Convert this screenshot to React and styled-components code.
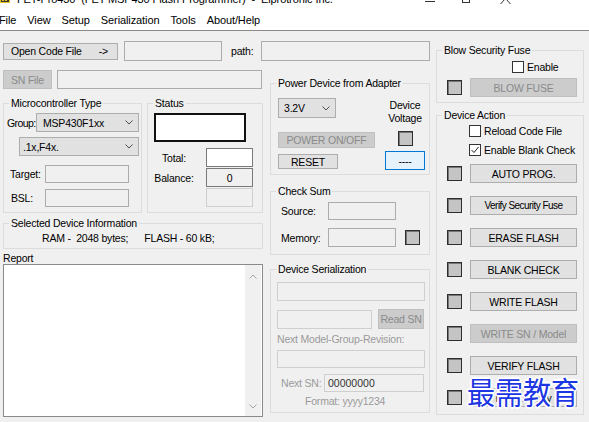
import React from "react";
import styled, { createGlobalStyle } from "styled-components";

const GlobalStyle = createGlobalStyle`
  *, *::before, *::after { box-sizing: border-box; }
  html, body { margin: 0; padding: 0; background: #f0f0f0; }
  body {
    font-family: "Liberation Sans", Arial, sans-serif;
    font-size: 10.5px;
    letter-spacing: -0.2px;
    color: #000;
  }
`;

const Window = styled.div`
  position: relative;
  width: 589px;
  height: 422px;
  overflow: hidden;
  background: #f0f0f0;
`;

const TitleBar = styled.div`
  height: 10px;
  background: #fff;
  overflow: hidden;
`;

const TitleRow = styled.div`
  display: flex;
  align-items: flex-start;
  margin-top: -7px;
  height: 17px;
  font-size: 11px;
  line-height: 12px;
  letter-spacing: -0.1px;
  white-space: pre;
`;

const TitleText = styled.span`
  margin-left: 7px;
`;

const WinControls = styled.div`
  margin-left: auto;
  margin-right: 78px;
  display: flex;
  align-items: flex-start;
`;

const CtlGlyph = styled.svg`
  flex: none;
  margin-left: ${(p) => p.$ml || 0}px;
  margin-top: ${(p) => p.$mt || 0}px;
`;

const MenuBar = styled.div`
  display: flex;
  align-items: center;
  gap: 11px;
  height: 21px;
  background: #fff;
  border-bottom: 1px solid #8a8a8a;
  font-size: 11px;
  letter-spacing: -0.1px;
`;

const MenuItem = styled.span`
  line-height: 14px;
  &:first-child { margin-left: -1px; }
`;

const Body = styled.div`
  display: flex;
  gap: 5px;
  padding: 10px 0 0 3px;
`;

const LeftArea = styled.div`
  width: 428px;
  display: flex;
  flex-direction: column;
`;

const Row = styled.div`
  display: flex;
  align-items: ${(p) => p.$align || "center"};
  gap: ${(p) => p.$gap || 0}px;
  height: ${(p) => (p.$h ? `${p.$h}px` : "auto")};
  margin-top: ${(p) => p.$mt || 0}px;
  margin-left: ${(p) => p.$ml || 0}px;
`;

const LowerRow = styled.div`
  display: flex;
  gap: 7px;
  align-items: flex-start;
`;

const Column = styled.div`
  width: ${(p) => p.$w}px;
  margin-top: ${(p) => p.$mt || 0}px;
  display: flex;
  flex-direction: column;
`;

const Btn = styled.button`
  font: inherit;
  font-size: ${(p) => p.$fs || 10.5}px;
  letter-spacing: ${(p) => (p.$ls != null ? p.$ls : -0.2)}px;
  padding: 0;
  margin: 0 0 0 ${(p) => p.$ml || 0}px;
  width: ${(p) => p.$w}px;
  height: ${(p) => p.$h || 19}px;
  flex: none;
  display: flex;
  align-items: center;
  justify-content: center;
  white-space: nowrap;
  background: ${(p) => (p.$focus ? "#e5f1fb" : p.disabled ? "#cccccc" : "#e1e1e1")};
  border: 1px solid ${(p) => (p.$focus ? "#0078d7" : p.disabled ? "#bfbfbf" : "#adadad")};
  color: ${(p) => (p.disabled ? "#8a8a8a" : "#000")};
  border-radius: 0;
`;

const OpenBtn = styled(Btn)`
  justify-content: space-between;
  padding: 0 9px 0 7px;
`;

const Field = styled.div`
  width: ${(p) => p.$w}px;
  height: ${(p) => p.$h || 19}px;
  flex: none;
  margin-left: ${(p) => p.$ml || 0}px;
  background: ${(p) => (p.$variant === "white" ? "#fff" : "#f0f0f0")};
  border: 1px solid
    ${(p) =>
      ({ white: "#7a7a7a", ro: "#acacac", dark: "#7a7a7a", dis: "#cfcfcf" }[p.$variant || "ro"])};
  display: flex;
  align-items: center;
  justify-content: ${(p) => (p.$center ? "center" : "flex-start")};
  padding: 0 3px;
  color: #000;
`;

const SNValue = styled.span`
  color: #333;
  letter-spacing: 0;
`;

const Label = styled.span`
  flex: none;
  width: ${(p) => (p.$w ? `${p.$w}px` : "auto")};
  margin-left: ${(p) => p.$ml || 0}px;
  text-align: ${(p) => p.$align || "left"};
  letter-spacing: ${(p) => (p.$ls != null ? p.$ls : -0.2)}px;
  white-space: nowrap;
  line-height: 12px;
  color: ${(p) => (p.$muted ? "#9a9a9a" : "#000")};
`;

const Group = styled.fieldset`
  margin: ${(p) => p.$mt || 0}px 0 0 0;
  padding: 0;
  min-width: 0;
  border: 1px solid #dcdcdc;
  width: ${(p) => p.$w}px;
  height: ${(p) => p.$h}px;
  flex: none;
`;

const Legend = styled.legend`
  margin-left: 5px;
  padding: 0 2px;
  height: 12px;
  line-height: 12px;
  font-size: 10.5px;
`;

const Inner = styled.div`
  display: flex;
  flex-direction: column;
  padding: ${(p) => p.$pad || "0"};
`;

const Combo = styled.div`
  width: ${(p) => p.$w}px;
  height: ${(p) => p.$h || 19}px;
  flex: none;
  margin-left: ${(p) => p.$ml || 0}px;
  display: flex;
  align-items: center;
  justify-content: space-between;
  background: #e1e1e1;
  border: 1px solid #adadad;
  padding: 0 5px 0 ${(p) => p.$pl || 4}px;
`;

const StatusBox = styled.div`
  width: 92px;
  height: 29px;
  margin: 4px 0 0 6px;
  background: #fff;
  border: 2px solid #111;
`;

const StatusRows = styled.div`
  display: flex;
  flex-direction: column;
  gap: 1px;
  margin-top: 6px;
`;

const InfoText = styled.div`
  padding: 3px 0 0 38px;
  line-height: 12px;
  white-space: pre;
`;

const FlashSpan = styled.span`
  margin-left: 16px;
`;

const ReportLabel = styled.div`
  margin-top: 3px;
  line-height: 12px;
`;

const ReportBox = styled.div`
  height: 153px;
  background: #fff;
  border: 1px solid #8a8a8a;
  display: flex;
  justify-content: flex-end;
`;

const ScrollBar = styled.div`
  width: 16px;
  margin: 0 1px 0 0;
  background: #f0f0f0;
  display: flex;
  flex-direction: column;
  justify-content: space-between;
  align-items: center;
  padding: 9px 0 7px;
`;

const PowerBody = styled.div`
  display: flex;
`;

const PowerLeft = styled.div`
  display: flex;
  flex-direction: column;
  margin-left: 7px;
`;

const PowerRight = styled.div`
  width: 42px;
  margin-left: auto;
  margin-right: 3px;
  display: flex;
  flex-direction: column;
  align-items: center;
`;

const VoltText = styled.div`
  margin-top: 10px;
  line-height: 13px;
  text-align: center;
`;

const Lamp = styled.span`
  width: 15px;
  height: 15px;
  flex: none;
  margin-left: ${(p) => p.$ml || 0}px;
  margin-top: ${(p) => p.$mt || 0}px;
  background: #c4c4c4;
  border: 1px solid #2e2e2e;
  box-shadow: inset 1px 1px 0 #777;
`;

const Stack = styled.div`
  margin-top: ${(p) => p.$mt || 0}px;
`;

const CheckRow = styled.div`
  display: flex;
  align-items: center;
  gap: 3px;
  height: 12px;
  margin-top: ${(p) => p.$mt || 0}px;
  margin-left: ${(p) => p.$ml || 0}px;
`;

const CheckBox = styled.span`
  width: 12px;
  height: 12px;
  flex: none;
  border: 1px solid #333;
  background: #fff;
  display: flex;
  align-items: center;
  justify-content: center;
`;

const ActionList = styled.div`
  display: flex;
  flex-direction: column;
  gap: 13px;
  margin-top: 8px;
`;

const ActionRow = styled.div`
  display: flex;
  align-items: center;
  height: 19px;
`;

const FormatText = styled.div`
  margin: 3px 0 0 28px;
  line-height: 12px;
  color: #9a9a9a;
`;

const Watermark = styled.div`
  position: absolute;
  left: 467px;
  top: 373px;
  font-family: "Noto Sans CJK SC", "Noto Sans CJK JP", sans-serif;
  font-size: 28px;
  line-height: 34px;
  letter-spacing: 0;
  color: #1c36e4;
  transform: scaleY(1.08);
  transform-origin: top left;
  text-shadow: 1px 0 0 #fff, -1px 0 0 #fff, 0 1px 0 #fff, 0 -1px 0 #fff,
    1px 1px 0 #fff, -1px -1px 0 #fff, 1px -1px 0 #fff, -1px 1px 0 #fff,
    2px 0 1px #fff, -2px 0 1px #fff, 0 2px 1px #fff, 0 -2px 1px #fff;
  pointer-events: none;
`;

const Chevron = () => (
  <svg width="8" height="5" viewBox="0 0 8 5">
    <polyline points="0.5,0.5 4,4 7.5,0.5" fill="none" stroke="#505050" strokeWidth="1" />
  </svg>
);

const ScrollArrow = ({ up }) => (
  <svg width="8" height="5" viewBox="0 0 8 5">
    <polyline
      points={up ? "0.5,4.5 4,1 7.5,4.5" : "0.5,0.5 4,4 7.5,0.5"}
      fill="none"
      stroke="#a6a6a6"
      strokeWidth="1"
    />
  </svg>
);

const Check = () => (
  <svg width="10" height="10" viewBox="0 0 10 10">
    <polyline points="1.5,5 4,7.5 8.5,2" fill="none" stroke="#222" strokeWidth="1" />
  </svg>
);

const AppIcon = () => (
  <svg width="10" height="10" viewBox="0 0 10 10">
    <rect x="0" y="0" width="10" height="10" fill="#e8c020" />
    <rect x="1" y="6" width="8" height="3" fill="#3a3a3a" />
    <rect x="2" y="7" width="2" height="1" fill="#e8c020" />
    <rect x="5" y="7" width="2" height="1" fill="#e8c020" />
  </svg>
);

const actions = [
  { t: "AUTO PROG." },
  { t: "Verify Security Fuse", fs: 10, ls: -0.55 },
  { t: "ERASE FLASH" },
  { t: "BLANK CHECK" },
  { t: "WRITE FLASH" },
  { t: "WRITE SN / Model", d: true },
  { t: "VERIFY FLASH" },
  { t: "Read / Copy" },
];

export default function App() {
  return (
    <>
      <GlobalStyle />
      <Window>
        <TitleBar>
          <TitleRow>
            <AppIcon />
            <TitleText>FET-Pro430  (FET MSP430 Flash Programmer)  -  Elprotronic Inc.</TitleText>
            <WinControls>
              <CtlGlyph width="10" height="10" viewBox="0 0 10 10" $mt={7}>
                <line x1="0" y1="1.5" x2="10" y2="1.5" stroke="#333" strokeWidth="1" />
              </CtlGlyph>
              <CtlGlyph width="8" height="11" viewBox="0 0 8 11" $ml={27}>
                <rect x="0.5" y="0.5" width="7" height="9" fill="none" stroke="#333" strokeWidth="1" />
              </CtlGlyph>
              <CtlGlyph width="11" height="11" viewBox="0 0 11 11" $ml={30}>
                <line x1="0.5" y1="0" x2="10.5" y2="11" stroke="#333" strokeWidth="1" />
                <line x1="10.5" y1="0" x2="0.5" y2="11" stroke="#333" strokeWidth="1" />
              </CtlGlyph>
            </WinControls>
          </TitleRow>
        </TitleBar>
        <MenuBar>
          <MenuItem>File</MenuItem>
          <MenuItem>View</MenuItem>
          <MenuItem>Setup</MenuItem>
          <MenuItem>Serialization</MenuItem>
          <MenuItem>Tools</MenuItem>
          <MenuItem>About/Help</MenuItem>
        </MenuBar>
        <Body>
          <LeftArea>
            <Row $h={20}>
              <OpenBtn $w={115} $h={17}>
                <span>Open Code File</span>
                <span>-&gt;</span>
              </OpenBtn>
              <Field $w={98} $h={20} $ml={6} />
              <Label $ml={9}>path:</Label>
              <Field $w={169} $h={20} $ml={8} />
            </Row>
            <LowerRow>
              <Column $w={260}>
                <Row $h={19} $mt={9}>
                  <Btn $w={49} disabled>SN File</Btn>
                  <Field $w={205} $ml={5} />
                </Row>
                <Row $mt={8} $align="flex-start" $gap={5}>
                  <Group $w={139} $h={116}>
                    <Legend>Microcontroller Type</Legend>
                    <Inner $pad="4px 0 0 0">
                      <Row>
                        <Label $ml={3} $w={29} $ls={-0.6}>Group:</Label>
                        <Combo $w={103} $pl={6}>
                          <span>MSP430F1xx</span>
                          <Chevron />
                        </Combo>
                      </Row>
                      <Row $mt={5}>
                        <Combo $w={120} $ml={15} $pl={3}>
                          <span>.1x,F4x.</span>
                          <Chevron />
                        </Combo>
                      </Row>
                      <Row $mt={9}>
                        <Label $ml={6} $w={35}>Target:</Label>
                        <Field $w={84} $h={18} />
                      </Row>
                      <Row $mt={6}>
                        <Label $ml={7} $w={34}>BSL:</Label>
                        <Field $w={84} $h={18} />
                      </Row>
                    </Inner>
                  </Group>
                  <Group $w={116} $h={116}>
                    <Legend>Status</Legend>
                    <Inner>
                      <StatusBox />
                      <StatusRows>
                        <Row>
                          <Label $w={52} $align="center">Total:</Label>
                          <Field $w={47} $ml={6} $variant="white" />
                        </Row>
                        <Row>
                          <Label $w={52} $align="center">Balance:</Label>
                          <Field $w={47} $ml={6} $variant="dark" $center>0</Field>
                        </Row>
                        <Row>
                          <Label $w={52} />
                          <Field $w={47} $ml={6} $variant="dis" />
                        </Row>
                      </StatusRows>
                    </Inner>
                  </Group>
                </Row>
                <Group $w={260} $h={32} $mt={4}>
                  <Legend>Selected Device Information</Legend>
                  <InfoText>
                    RAM -  2048 bytes;<FlashSpan>FLASH - 60 kB;</FlashSpan>
                  </InfoText>
                </Group>
                <ReportLabel>Report</ReportLabel>
                <ReportBox>
                  <ScrollBar>
                    <ScrollArrow up />
                    <ScrollArrow />
                  </ScrollBar>
                </ReportBox>
              </Column>
              <Column $w={160} $mt={16}>
                <Group $w={160} $h={98}>
                  <Legend>Power Device from Adapter</Legend>
                  <PowerBody>
                    <PowerLeft>
                      <Stack $mt={9}>
                        <Combo $w={58} $h={20} $pl={5}>
                          <span>3.2V</span>
                          <Chevron />
                        </Combo>
                      </Stack>
                      <Stack $mt={14}>
                        <Btn $w={97} $h={16} disabled>POWER ON/OFF</Btn>
                      </Stack>
                      <Stack $mt={6}>
                        <Btn $w={60} $h={15}>RESET</Btn>
                      </Stack>
                    </PowerLeft>
                    <PowerRight>
                      <VoltText>
                        Device
                        <br />
                        Voltage
                      </VoltText>
                      <Lamp $mt={6} />
                      <Stack $mt={5}>
                        <Btn $w={40} $h={19} $focus>----</Btn>
                      </Stack>
                    </PowerRight>
                  </PowerBody>
                </Group>
                <Group $w={160} $h={70} $mt={10}>
                  <Legend>Check Sum</Legend>
                  <Inner>
                    <Row $mt={5}>
                      <Label $ml={10} $w={47}>Source:</Label>
                      <Field $w={68} $h={18} />
                    </Row>
                    <Row $mt={8}>
                      <Label $ml={10} $w={47}>Memory:</Label>
                      <Field $w={68} $h={19} />
                      <Lamp $ml={9} />
                    </Row>
                  </Inner>
                </Group>
                <Group $w={160} $h={150} $mt={8}>
                  <Legend>Device Serialization</Legend>
                  <Inner $pad="0 0 0 6px">
                    <Stack $mt={7}>
                      <Field $w={148} $variant="dis" />
                    </Stack>
                    <Row $mt={8}>
                      <Field $w={95} $variant="dis" />
                      <Btn $w={46} $h={20} $ml={6} disabled>Read SN</Btn>
                    </Row>
                    <Stack $mt={4}>
                      <Label $muted>Next Model-Group-Revision:</Label>
                    </Stack>
                    <Stack $mt={5}>
                      <Field $w={148} $h={18} $variant="dis" />
                    </Stack>
                    <Row $mt={6}>
                      <Label $ml={4} $w={43} $muted>Next SN:</Label>
                      <Field $w={100} $h={18} $variant="dis">
                        <SNValue>00000000</SNValue>
                      </Field>
                    </Row>
                    <FormatText>Format: yyyy1234</FormatText>
                  </Inner>
                </Group>
              </Column>
            </LowerRow>
          </LeftArea>
          <Column $w={148} $mt={3}>
            <Group $w={148} $h={59}>
              <Legend>Blow Security Fuse</Legend>
              <Inner>
                <CheckRow $mt={5} $ml={75}>
                  <CheckBox />
                  <Label>Enable</Label>
                </CheckRow>
                <Row $mt={5} $h={19}>
                  <Lamp $ml={10} />
                  <Btn $w={107} $h={19} $ml={8} disabled>BLOW FUSE</Btn>
                </Row>
              </Inner>
            </Group>
            <Group $w={148} $h={306} $mt={6}>
              <Legend>Device Action</Legend>
              <Inner>
                <CheckRow $mt={4} $ml={32}>
                  <CheckBox />
                  <Label>Reload Code File</Label>
                </CheckRow>
                <CheckRow $mt={7} $ml={32}>
                  <CheckBox>
                    <Check />
                  </CheckBox>
                  <Label>Enable Blank Check</Label>
                </CheckRow>
                <ActionList>
                  {actions.map((a) => (
                    <ActionRow key={a.t}>
                      <Lamp $ml={10} />
                      <Btn
                        $w={107}
                        $h={19}
                        $ml={8}
                        $fs={a.fs}
                        $ls={a.ls}
                        disabled={!!a.d}
                      >
                        {a.t}
                      </Btn>
                    </ActionRow>
                  ))}
                </ActionList>
              </Inner>
            </Group>
          </Column>
        </Body>
        <Watermark>最需教育</Watermark>
      </Window>
    </>
  );
}
